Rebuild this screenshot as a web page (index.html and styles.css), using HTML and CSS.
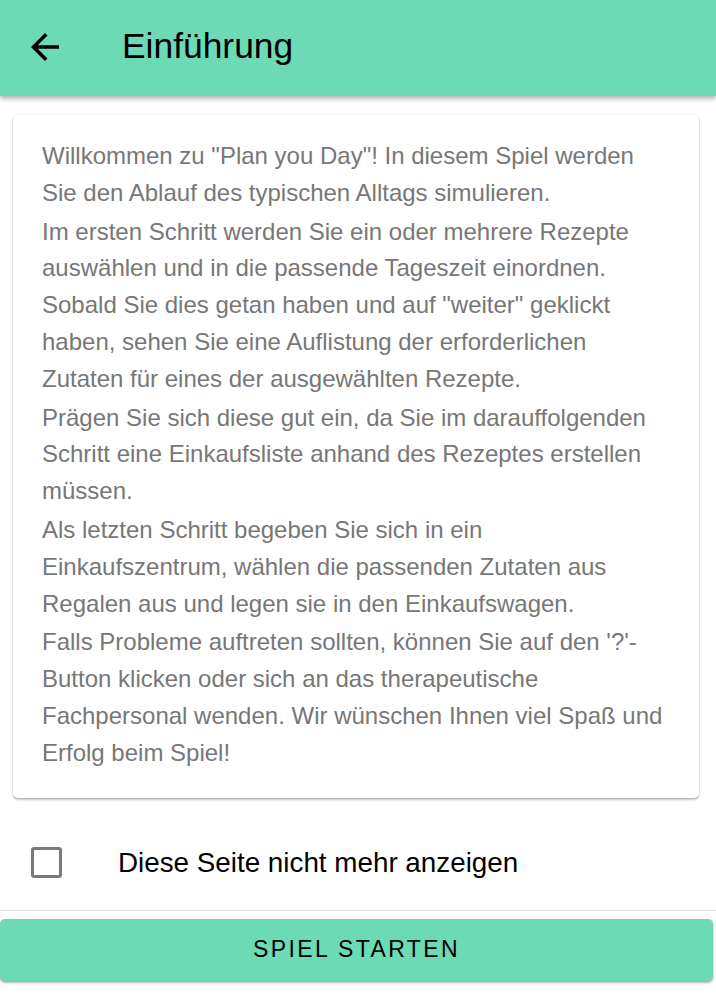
FILE: index.html
```html
<!DOCTYPE html>
<html lang="de">
<head>
<meta charset="utf-8">
<title>Einführung</title>
<link rel="stylesheet" href="styles.css">
</head>
<body>
<header class="appbar">
  <svg class="back" viewBox="0 0 24 24" width="42" height="42" aria-hidden="true"><path d="M20 11H7.83l5.59-5.59L12 4l-8 8 8 8 1.41-1.41L7.83 13H20v-2z" fill="#000"/></svg>
  <h1 class="title">Einführung</h1>
</header>
<main class="content">
  <section class="card">
    <p>Willkommen zu "Plan you Day"! In diesem Spiel werden Sie den Ablauf des typischen Alltags simulieren.</p>
    <p>Im ersten Schritt werden Sie ein oder mehrere Rezepte auswählen und in die passende Tageszeit einordnen. Sobald Sie dies getan haben und auf "weiter" geklickt haben, sehen Sie eine Auflistung der erforderlichen Zutaten für eines der ausgewählten Rezepte.</p>
    <p>Prägen Sie sich diese gut ein, da Sie im darauffolgenden Schritt eine Einkaufsliste anhand des Rezeptes erstellen müssen.</p>
    <p>Als letzten Schritt begeben Sie sich in ein Einkaufszentrum, wählen die passenden Zutaten aus Regalen aus und legen sie in den Einkaufswagen.</p>
    <p>Falls Probleme auftreten sollten, können Sie auf den '?'-Button klicken oder sich an das therapeutische Fachpersonal wenden. Wir wünschen Ihnen viel Spaß und Erfolg beim Spiel!</p>
  </section>
  <label class="check-row">
    <span class="checkbox"></span>
    <span class="check-label">Diese Seite nicht mehr anzeigen</span>
  </label>
  <div class="divider"></div>
  <button class="start">SPIEL STARTEN</button>
</main>
</body>
</html>
```
FILE: styles.css
```css
* { box-sizing: border-box; }
html, body { margin: 0; padding: 0; background: #fff; }
body { width: 716px; height: 1004px; overflow: hidden; font-family: "Liberation Sans", Arial, sans-serif; }

.appbar {
  height: 96px;
  background: #6cdab5;
  display: flex;
  align-items: center;
  padding-left: 24px;
  box-shadow: 0 2px 4px rgba(0,0,0,0.2), 0 4px 5px rgba(0,0,0,0.12);
  position: relative;
  z-index: 1;
}
.back { display: block; margin-top: -2px; flex: none; }
.title {
  margin: -3px 0 0 56px;
  font-weight: 400;
  font-size: 35.4px;
  color: #000;
}

.content { padding: 19px 0 0 0; }

.card {
  margin: 0 17px 0 13px;
  background: #fff;
  border-radius: 5px;
  padding: 23px 29px 26px 29px;
  box-shadow: 0 1px 3px rgba(0,0,0,0.25), 0 2px 2px rgba(0,0,0,0.12);
}
.card p {
  margin: 0 0 2px 0;
  font-size: 24px;
  line-height: 36.8px;
  color: #777;
}
.card p:last-child { margin-bottom: 0; }

.check-row {
  display: flex;
  align-items: center;
  height: 66px;
  margin: 32px 0 14px 0;
  padding-left: 31px;
}
.checkbox {
  width: 31px;
  height: 31px;
  border: 3px solid #7a7a7a;
  border-radius: 3px;
  flex: none;
}
.check-label {
  margin-left: 56px;
  font-size: 27.8px;
  color: #000;
}

.divider { height: 1px; background: #ddd; }

.start {
  display: block;
  margin: 8px 3px 0 0;
  width: 713px;
  height: 62px;
  border: none;
  border-radius: 5px;
  background: #6cdab5;
  font-family: "Liberation Sans", Arial, sans-serif;
  font-size: 23px;
  letter-spacing: 2.4px;
  color: #000;
  box-shadow: 0 2px 3px rgba(0,0,0,0.25), 0 1px 2px rgba(0,0,0,0.15);
}
```
